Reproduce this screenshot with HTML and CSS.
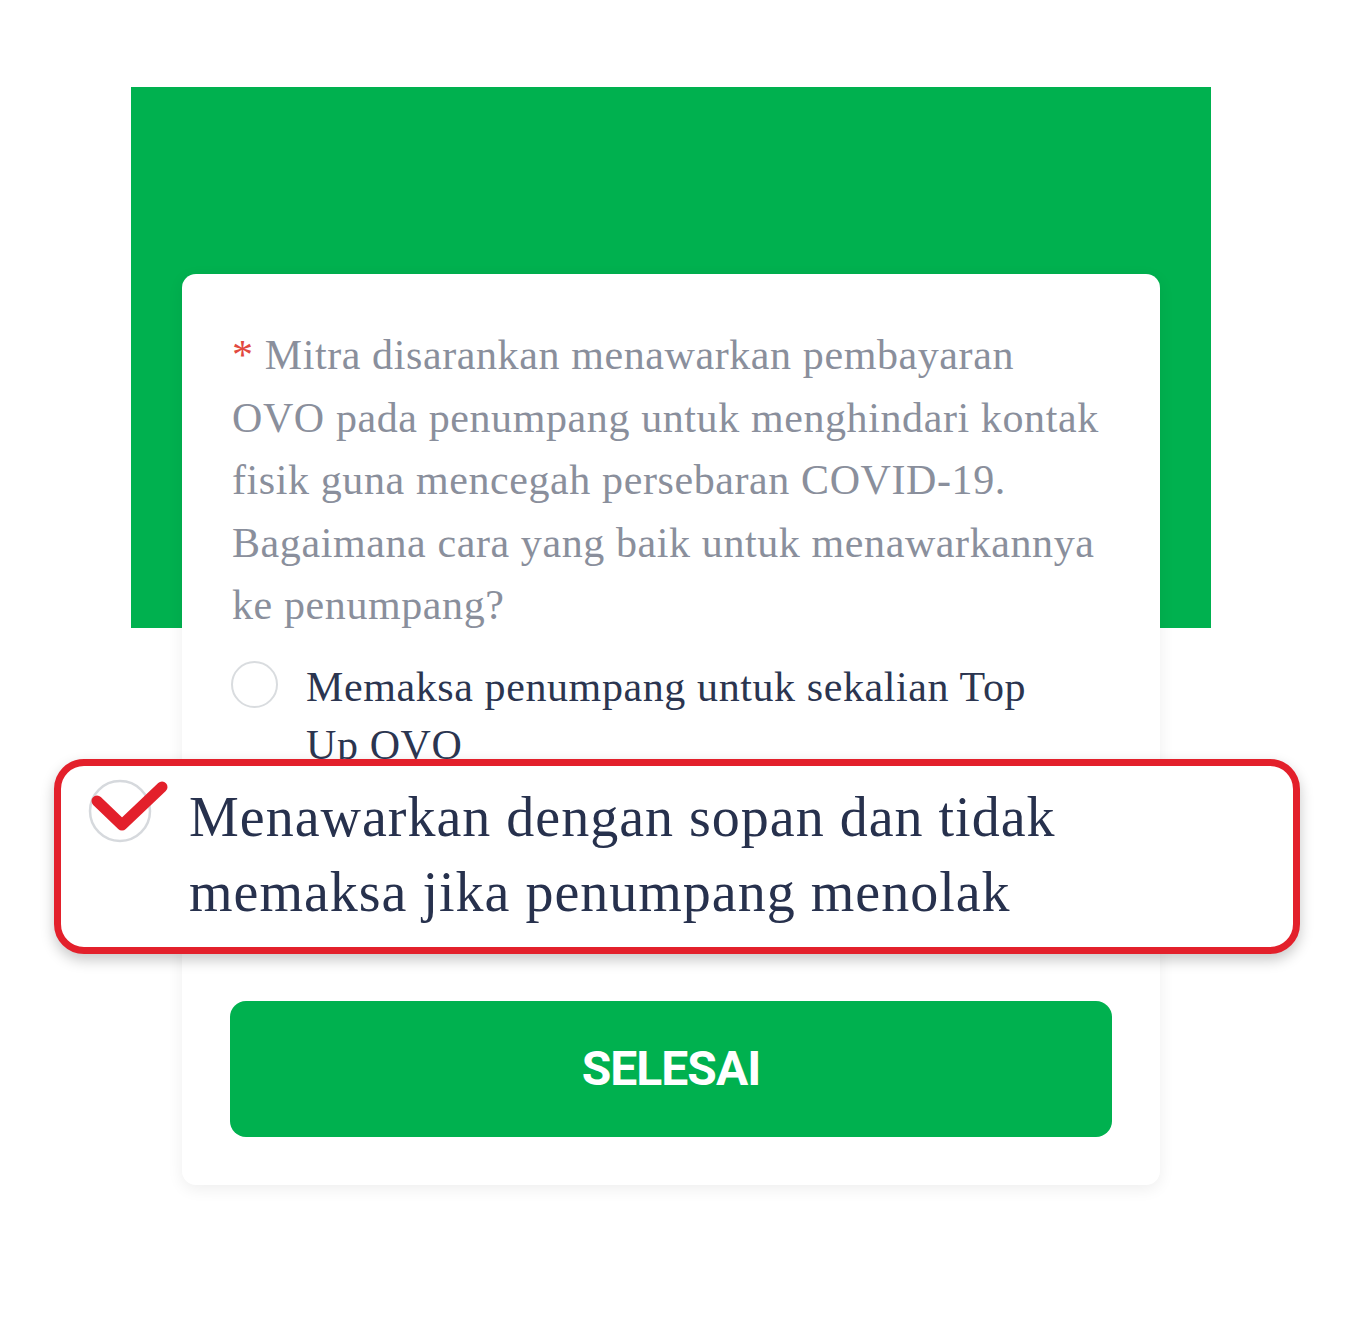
FILE: index.html
```html
<!DOCTYPE html>
<html lang="id">
<head>
  <meta charset="UTF-8" />
  <meta name="viewport" content="width=device-width, initial-scale=1.0"/>
  <title>Kuis Mitra</title>
  <link rel="stylesheet" href="styles.css">
</head>
<body>
  <div class="page">
    <div class="hero"></div>

    <div class="card">
      <p class="question"><span class="req">*</span> Mitra disarankan menawarkan pembayaran OVO pada penumpang untuk menghindari kontak fisik guna mencegah persebaran COVID-19. Bagaimana cara yang baik untuk menawarkannya ke penumpang?</p>

      <div class="option">
        <span class="radio"></span>
        <span class="option-text">Memaksa penumpang untuk sekalian Top Up OVO</span>
      </div>

      <div class="callout">
        <svg class="check" width="80" height="64" viewBox="0 0 80 64">
          <circle cx="32" cy="32" r="30" fill="none" stroke="#d6d9dd" stroke-width="2.5"/>
          <path d="M9 22 L34 46 L74 8" fill="none" stroke="#e3202b" stroke-width="11" stroke-linecap="round" stroke-linejoin="round"/>
        </svg>
        <span class="callout-text">Menawarkan dengan sopan dan tidak memaksa jika penumpang menolak</span>
      </div>

      <button class="done">SELESAI</button>
    </div>
  </div>
</body>
</html>
```

FILE: styles.css
```css
body {
  margin: 0;
  background: #ffffff;
  font-family: "Liberation Serif", "Times New Roman", serif;
}
.page {
  width: 1080px;
  margin-left: 131px;
  padding-top: 87px;
  padding-bottom: 141px;
}
.hero {
  height: 541px;
  background-color: #00b14f;
}
.card {
  margin: -354px 51px 0;
  padding: 50px 48px 48px;
  background: white;
  border-radius: 14px;
  box-shadow: 0 4px 16px rgba(0,0,0,0.07);
}
.question {
  margin: 0;
  padding-left: 2px;
  font-size: 42px;
  letter-spacing: 0.6px;
  line-height: 62.5px;
  color: #8a8f9c;
}
.req {
  color: #e2493f;
}
.option {
  display: flex;
  align-items: flex-start;
  gap: 28px;
  margin-top: 21px;
  padding-left: 1px;
  height: 101px;
  overflow: hidden;
}
.radio {
  flex: none;
  width: 43px;
  height: 43px;
  margin-top: 3px;
  border: 2px solid #d9dcdf;
  border-radius: 50%;
}
.option-text {
  font-size: 42px;
  letter-spacing: 0.6px;
  line-height: 58px;
  color: #2b3550;
  padding-right: 60px;
}
.callout {
  display: flex;
  align-items: flex-start;
  gap: 21px;
  margin: 0 -188px 0 -176px;
  padding: 13px 20px 17px 27px;
  border: 7px solid #e3202b;
  border-radius: 30px;
  background: white;
  box-shadow: 0 6px 14px rgba(0,0,0,0.22);
}
.check {
  flex: none;
  overflow: visible;
}
.callout-text {
  margin-top: 1px;
  font-size: 56px;
  letter-spacing: 1px;
  line-height: 75px;
  color: #27314d;
  padding-right: 150px;
}
.done {
  display: block;
  width: 100%;
  height: 136px;
  margin-top: 47px;
  border: none;
  border-radius: 16px;
  background-color: #00b14f;
  color: white;
  font-family: Roboto, "DejaVu Sans", sans-serif;
  font-weight: bold;
  font-size: 48px;
  letter-spacing: -1px;
  cursor: pointer;
}
```
